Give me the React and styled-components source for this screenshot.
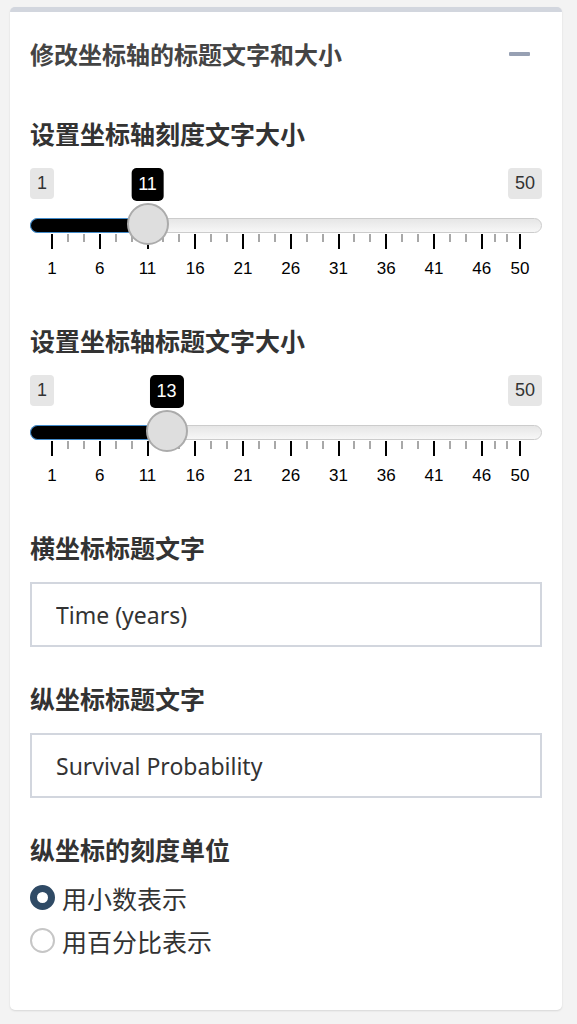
import styled, { createGlobalStyle } from 'styled-components';

const GlobalStyle = createGlobalStyle`
  body {
    margin: 0;
    background: #f3f3f3;
    font-family: "Noto Sans", "Noto Sans CJK SC", sans-serif;
  }
`;

const Box = styled.section`
  margin: 7px 15px 14px 10px;
  background: #fff;
  border-top: 5px solid #d2d6de;
  border-radius: 5px;
  box-shadow: 0 1px 2px rgba(0, 0, 0, 0.12);
  padding-bottom: 48px;
`;

const BoxHeader = styled.header`
  display: flex;
  align-items: center;
  justify-content: space-between;
  height: 84px;
  padding: 0 32px 0 20px;
`;

const BoxTitle = styled.h3`
  margin: 0;
  font-family: "Noto Sans CJK SC", sans-serif;
  font-size: 24px;
  font-weight: 700;
  line-height: 1;
  color: #444;
`;

const CollapseButton = styled.span`
  display: block;
  width: 21px;
  height: 4px;
  border-radius: 1px;
  background: #97a0b3;
`;

const BoxBody = styled.div`
  display: flex;
  flex-direction: column;
  gap: 36px;
  padding: 22px 20px 0;
`;

const FormGroup = styled.div`
  display: flex;
  flex-direction: column;
  gap: ${({ $tight }) => ($tight ? 12 : 20)}px;
`;

const Label = styled.label`
  display: block;
  font-family: "Noto Sans CJK SC", sans-serif;
  font-size: 25px;
  font-weight: 700;
  line-height: 30px;
  color: #333;
`;

/* ion.rangeSlider, shiny skin */
const Slider = styled.div`
  position: relative;
  display: flex;
  flex-direction: column;
  height: 121px;
  font-family: "Liberation Sans", Arial, sans-serif;
`;

const EdgeRow = styled.div`
  display: flex;
  justify-content: space-between;
  height: 31px;
`;

const EdgeLabel = styled.span`
  padding: 0 7px;
  border-radius: 4px;
  background: #e6e6e6;
  color: #333;
  font-size: 18px;
  line-height: 31px;
`;

const Track = styled.div`
  position: relative;
  height: 15px;
  margin-top: 19px;
  box-sizing: border-box;
  border: 1px solid #ccc;
  border-radius: 8px;
  background: linear-gradient(to bottom, #dedede -50%, #fff 150%);
`;

const Bar = styled.div`
  position: absolute;
  top: -1px;
  left: -1px;
  height: 15px;
  box-sizing: border-box;
  border: 1px solid #428bca;
  border-right: none;
  border-radius: 8px 0 0 8px;
  background: #000;
`;

const SingleLabel = styled.span`
  position: absolute;
  top: 0;
  height: 33px;
  padding: 0 7px;
  border-radius: 5px;
  background: #000;
  color: #fff;
  font-size: 18px;
  line-height: 33px;
  transform: translateX(-50%);
  z-index: 2;
`;

const Handle = styled.span`
  position: absolute;
  top: 35px;
  width: 42px;
  height: 42px;
  box-sizing: border-box;
  border: 2px solid #ababab;
  border-radius: 50%;
  background: #dedede;
  transform: translateX(-50%);
  z-index: 3;
`;

const Grid = styled.div`
  position: relative;
  height: 50px;
  margin-top: 1px;
`;

const Tick = styled.span`
  position: absolute;
  top: 0;
  width: 2px;
  height: ${({ $small }) => ($small ? 8 : 15)}px;
  margin-left: -1px;
  background: ${({ $small }) => ($small ? '#a8a8a8' : '#000')};
`;

const TickText = styled.span`
  position: absolute;
  top: 24px;
  font-size: 17px;
  line-height: 22px;
  color: #000;
  transform: translateX(-50%);
`;

const Input = styled.input`
  display: block;
  width: 100%;
  height: 65px;
  box-sizing: border-box;
  padding: 0 24px;
  border: 2px solid #d2d6de;
  border-radius: 0;
  background: #fff;
  font-family: "Noto Sans", sans-serif;
  font-size: 23px;
  color: #333;
  outline: none;
`;

const RadioList = styled.div`
  display: flex;
  flex-direction: column;
`;

const RadioRow = styled.label`
  display: flex;
  align-items: center;
  gap: 7px;
  height: 43px;
  font-family: "Noto Sans CJK SC", sans-serif;
  font-size: 25px;
  color: #333;
`;

const RadioDot = styled.span`
  width: 25px;
  height: 25px;
  box-sizing: border-box;
  border-radius: 50%;
  background: #fff;
  border: ${({ $checked }) => ($checked ? '7px solid #2f4a65' : '2px solid #c6c6c6')};
`;

const MIN = 1;
const MAX = 50;
const GRID_START = 22;
const GRID_END = 490;
const posOf = (v) => GRID_START + ((v - MIN) * (GRID_END - GRID_START)) / (MAX - MIN);
const MAJORS = [1, 6, 11, 16, 21, 26, 31, 36, 41, 46, 50];

const RangeSlider = ({ value }) => {
  const x = posOf(value);
  const minors = [];
  for (let i = 0; i < MAJORS.length - 1; i++) {
    const a = posOf(MAJORS[i]);
    const b = posOf(MAJORS[i + 1]);
    minors.push(a + (b - a) / 3, a + ((b - a) * 2) / 3);
  }

  return (
    <Slider>
      <EdgeRow>
        <EdgeLabel>{MIN}</EdgeLabel>
        <EdgeLabel>{MAX}</EdgeLabel>
      </EdgeRow>
      <Track>
        <Bar style={{ width: x + 1 }} />
      </Track>
      <Grid>
        {MAJORS.map((v) => (
          <Tick key={`t${v}`} style={{ left: posOf(v) }} />
        ))}
        {minors.map((p, i) => (
          <Tick key={`m${i}`} $small style={{ left: p }} />
        ))}
        {MAJORS.map((v) => (
          <TickText key={`l${v}`} style={{ left: posOf(v) }}>{v}</TickText>
        ))}
      </Grid>
      <SingleLabel style={{ left: x }}>{value}</SingleLabel>
      <Handle style={{ left: x }} />
    </Slider>
  );
};

const App = () => {
  return (
    <>
      <GlobalStyle />
      <Box>
        <BoxHeader>
          <BoxTitle>修改坐标轴的标题文字和大小</BoxTitle>
          <CollapseButton />
        </BoxHeader>
        <BoxBody>
          <FormGroup>
            <Label>设置坐标轴刻度文字大小</Label>
            <RangeSlider value={11} />
          </FormGroup>
          <FormGroup>
            <Label>设置坐标轴标题文字大小</Label>
            <RangeSlider value={13} />
          </FormGroup>
          <FormGroup>
            <Label>横坐标标题文字</Label>
            <Input type="text" defaultValue="Time (years)" />
          </FormGroup>
          <FormGroup>
            <Label>纵坐标标题文字</Label>
            <Input type="text" defaultValue="Survival Probability" />
          </FormGroup>
          <FormGroup $tight>
            <Label>纵坐标的刻度单位</Label>
            <RadioList>
              <RadioRow>
                <RadioDot $checked />
                用小数表示
              </RadioRow>
              <RadioRow>
                <RadioDot />
                用百分比表示
              </RadioRow>
            </RadioList>
          </FormGroup>
        </BoxBody>
      </Box>
    </>
  );
};

export default App;
